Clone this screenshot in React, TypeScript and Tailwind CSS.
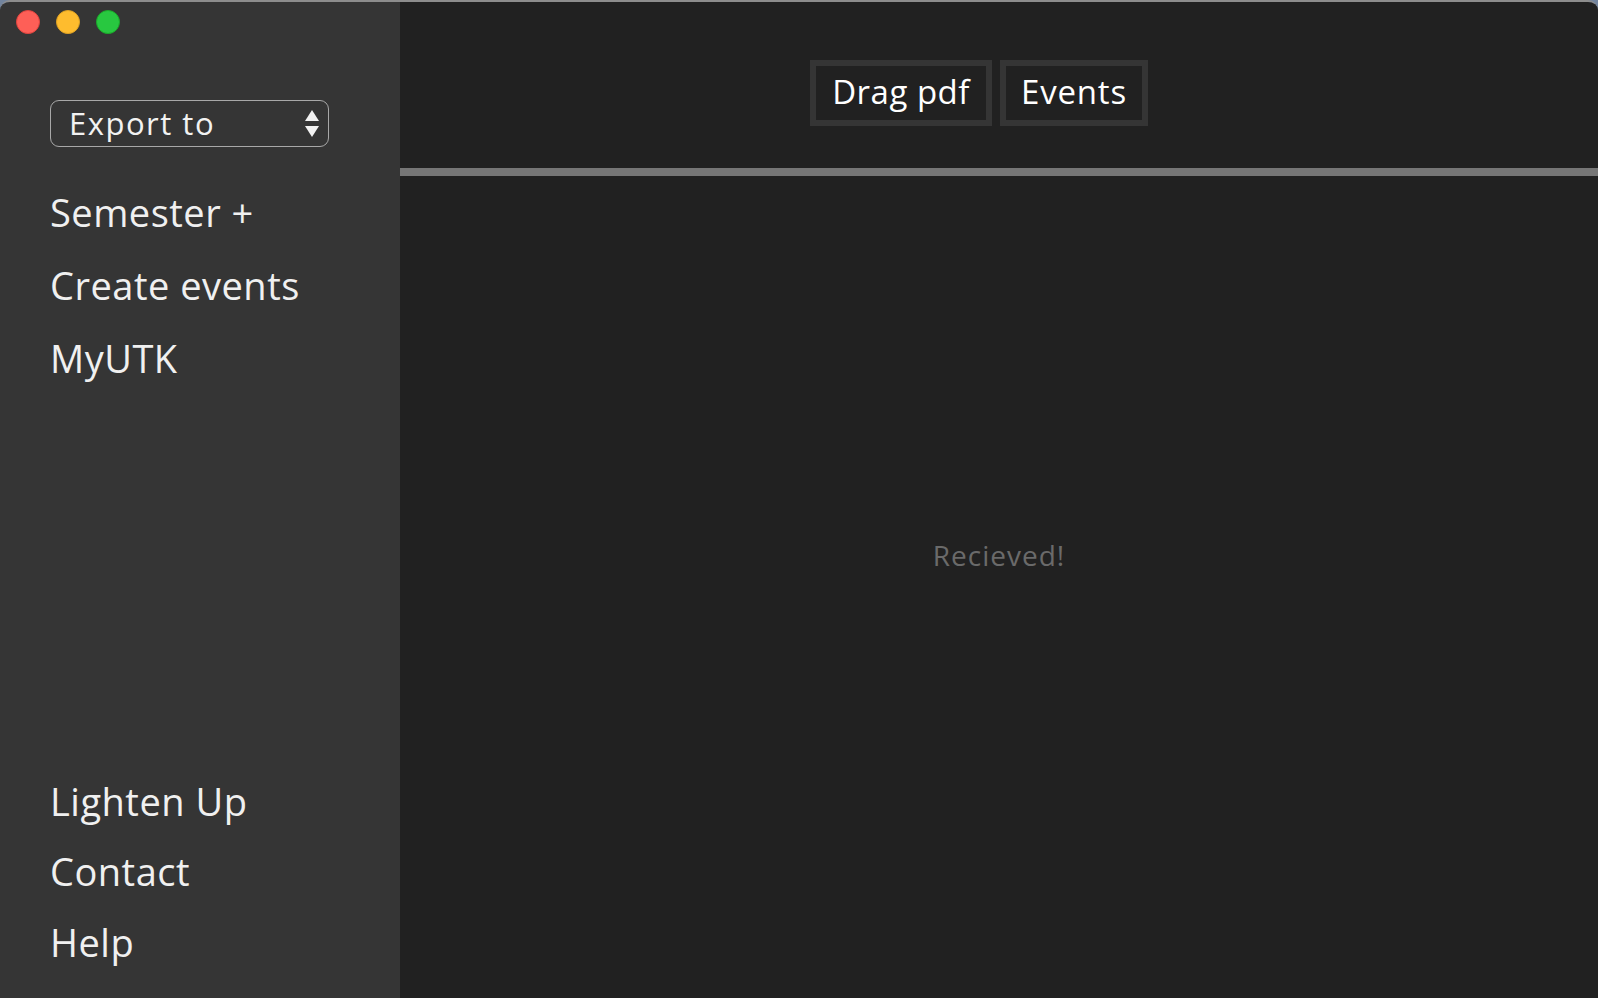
const font = { fontFamily: '"Open Sans", "DejaVu Sans", sans-serif' }

function TrafficLights() {
  return (
    <div className="flex gap-[16px] pl-[16px] pt-[8px]">
      <span className="w-[24px] h-[24px] rounded-full bg-[#fe5f57] border border-[#e0443e]" />
      <span className="w-[24px] h-[24px] rounded-full bg-[#febc2e] border border-[#dea123]" />
      <span className="w-[24px] h-[24px] rounded-full bg-[#28c840] border border-[#1aab29]" />
    </div>
  )
}

function SelectArrows() {
  return (
    <svg width="16" height="30" viewBox="0 0 16 30" className="shrink-0">
      <path d="M8 1 L15 12 L1 12 Z" fill="#f2f2f2" />
      <path d="M1 17 L15 17 L8 28 Z" fill="#f2f2f2" />
    </svg>
  )
}

export default function App() {
  const nav = ['Semester +', 'Create events', 'MyUTK']
  const footer = ['Lighten Up', 'Contact', 'Help']

  return (
    <div className="w-full h-[998px] bg-[#72849e]" style={font}>
      <div className="flex h-full rounded-t-[10px] overflow-hidden border-t-2 border-[#8d8d8d]">
        <aside className="w-[400px] shrink-0 bg-[#353535] flex flex-col">
          <TrafficLights />

          <div className="pl-[50px] mt-[66px]">
            <div className="w-[279px] h-[47px] rounded-[9px] border-[1.5px] border-[#a8a8a8] flex items-center justify-between pl-[18px] pr-[8px]">
              <span className="text-[31px] leading-none text-[#f2f2f2] tracking-[1.5px]">Export to</span>
              <SelectArrows />
            </div>
          </div>

          <nav className="pl-[50px] mt-[46px] flex flex-col gap-[35px]">
            {nav.map(n => (
              <span key={n} className="text-[38px] leading-[38px] text-[#f0f0f0] tracking-[0.5px]">{n}</span>
            ))}
          </nav>

          <div className="mt-auto pl-[50px] pb-[37px] flex flex-col">
            <span className="text-[38px] leading-[38px] text-[#f0f0f0] tracking-[0.5px]">{footer[0]}</span>
            <span className="mt-[32px] text-[38px] leading-[38px] text-[#f0f0f0] tracking-[0.5px]">{footer[1]}</span>
            <span className="mt-[33px] text-[38px] leading-[38px] text-[#f0f0f0] tracking-[0.5px]">{footer[2]}</span>
          </div>
        </aside>

        <main className="flex-1 bg-[#212121] flex flex-col">
          <div className="flex justify-center gap-[8px] pt-[58px] pr-[40px]">
            <button className="w-[182px] h-[66px] border-[6px] border-[#353535] text-[33px] leading-none text-white tracking-[0.5px] pb-[4px]">
              Drag pdf
            </button>
            <button className="w-[148px] h-[66px] border-[6px] border-[#353535] text-[33px] leading-none text-white tracking-[0.8px] pb-[4px]">
              Events
            </button>
          </div>

          <div className="mt-[42px] h-[8px] bg-[#767676]" />

          <div className="flex-1 flex justify-center pt-[365px]">
            <span className="text-[28px] leading-none text-[#6a6a6a] tracking-[1px]">Recieved!</span>
          </div>
        </main>
      </div>
    </div>
  )
}
